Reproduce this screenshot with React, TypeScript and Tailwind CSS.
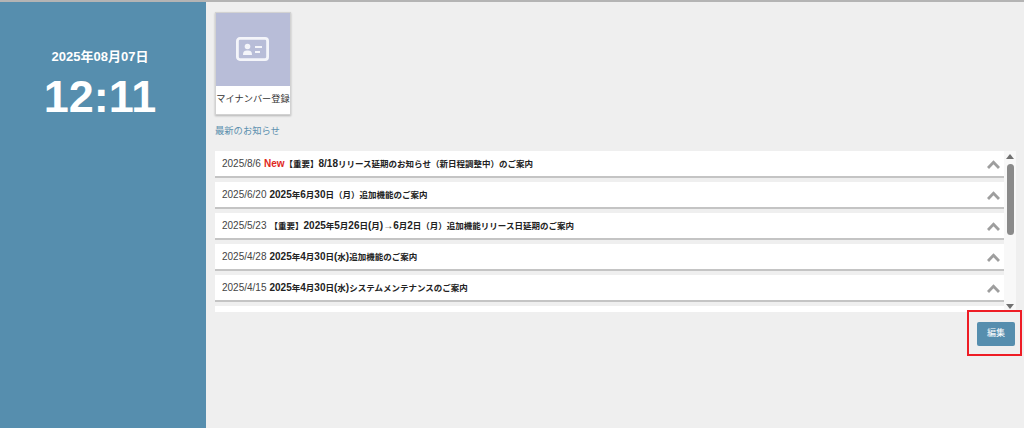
const font = "font-['Liberation_Sans','Noto_Sans_CJK_JP',sans-serif]";

const notices = [
  { date: '2025/8/6', isNew: true, title: '【重要】8/18リリース延期のお知らせ（新日程調整中）のご案内' },
  { date: '2025/6/20', title: '2025年6月30日（月）追加機能のご案内' },
  { date: '2025/5/23', title: '【重要】2025年5月26日(月)→6月2日（月）追加機能リリース日延期のご案内' },
  { date: '2025/4/28', title: '2025年4月30日(水)追加機能のご案内' },
  { date: '2025/4/15', title: '2025年4月30日(水)システムメンテナンスのご案内' },
];

function Chevron() {
  return (
    <svg className="mt-[1px]" width="13" height="9" viewBox="0 0 13 9" fill="none" stroke="#9e9e9e" strokeWidth="2.8">
      <path d="M1 8 L6.5 2.2 L12 8" />
    </svg>
  );
}

// digits are set larger than the kana/kanji in the titles
function Title({ text, isNew }: { text: string; isNew?: boolean }) {
  const parts = text.split(/([0-9/()→]+)/);
  return (
    <span className={isNew ? 'text-[8.5px] leading-[12px] font-bold text-[#222]' : 'ml-[3px] text-[8.5px] leading-[12px] font-bold text-[#222]'}>
      {parts.map((part, i) =>
        i % 2 === 1 ? (
          <span key={i} className="text-[10px] leading-[12px]">
            {part}
          </span>
        ) : (
          part
        ),
      )}
    </span>
  );
}

function NoticeRow({ date, isNew, title }: { date: string; isNew?: boolean; title: string }) {
  return (
    <div className="mb-[4px] flex h-[27px] shrink-0 items-center justify-between border-b-2 border-[#c4c4c4] bg-white pr-[4px] pl-[7px]">
      <p className="mb-[2px] whitespace-nowrap leading-[12px] text-[#444]">
        <span className="text-[10px] leading-[12px]">{date}</span>
        {isNew && <span className="ml-[3px] text-[10px] leading-[12px] font-bold text-[#e0281e]">New</span>}
        <Title text={title} isNew={isNew} />
      </p>
      <Chevron />
    </div>
  );
}

export default function App() {
  return (
    <div className={`${font} flex h-[428px] w-[1024px] overflow-hidden border-t-2 border-[#b4b4b4] bg-[#efefef]`}>
      <aside className="flex w-[206px] shrink-0 flex-col items-center bg-[#568eae] pt-[47px] pr-[6px] text-white">
        <p className="text-[13px] leading-[16px] font-bold">2025年08月07日</p>
        <p className="mt-[7px] text-[45px] leading-[50px] font-bold">12:11</p>
      </aside>
      <main className="flex-1 pt-[10px] pl-[9px]">
        <div className="flex h-[103px] w-[76px] flex-col border border-[#d2d2d2] bg-white shadow-[0_1px_2px_rgba(0,0,0,0.25)]">
          <div className="flex h-[73px] items-center justify-center bg-[#b8bdd8]">
            <svg className="mr-[2px] mb-[2px]" width="33" height="24" viewBox="0 0 33 24" fill="none">
              <rect x="1.4" y="1.4" width="30.2" height="21.2" rx="2.5" stroke="#f4f5fa" strokeWidth="2.8" />
              <circle cx="11.5" cy="9.5" r="2.8" fill="#f4f5fa" />
              <path d="M7 18 C7 14 9 13.5 11.5 13.5 C14 13.5 16 14 16 18 Z" fill="#f4f5fa" />
              <rect x="19" y="9" width="7" height="2" fill="#f4f5fa" />
              <rect x="19" y="14" width="5" height="2" fill="#f4f5fa" />
            </svg>
          </div>
          <p className="flex-1 text-center text-[9.2px] leading-[26px] whitespace-nowrap text-[#333]">マイナンバー登録</p>
        </div>
        <p className="mt-[10px] text-[9.3px] leading-[13px] text-[#5b8fae]">最新のお知らせ</p>
        <div className="mt-[13px] flex h-[161px] w-[801px]">
          <div className="flex h-full flex-1 flex-col overflow-hidden">
            {notices.map((n) => (
              <NoticeRow key={n.date} {...n} />
            ))}
            <div className="h-[10px] shrink-0 bg-white" />
          </div>
          <div className="flex w-[12px] flex-col items-center justify-between bg-[#f8f8f8] py-[3px]">
            <svg width="8" height="5" viewBox="0 0 8 5" fill="#707070"><path d="M4 0 L8 5 L0 5 Z" /></svg>
            <div className="mt-[5px] mb-auto h-[71px] w-[7px] rounded-full bg-[#8a8a8a]" />
            <svg width="8" height="5" viewBox="0 0 8 5" fill="#707070"><path d="M4 5 L8 0 L0 0 Z" /></svg>
          </div>
        </div>
        <div className="mt-[-2px] flex w-[807px] justify-end">
          <div className="flex h-[46px] w-[55px] items-center justify-end border-2 border-[#ee1c25] pt-[2px] pr-[5px]">
            <button className="flex h-[24px] w-[38px] items-center justify-center rounded-[2px] bg-[#568eae] text-[9px] text-white">
              編集
            </button>
          </div>
        </div>
      </main>
    </div>
  );
}
